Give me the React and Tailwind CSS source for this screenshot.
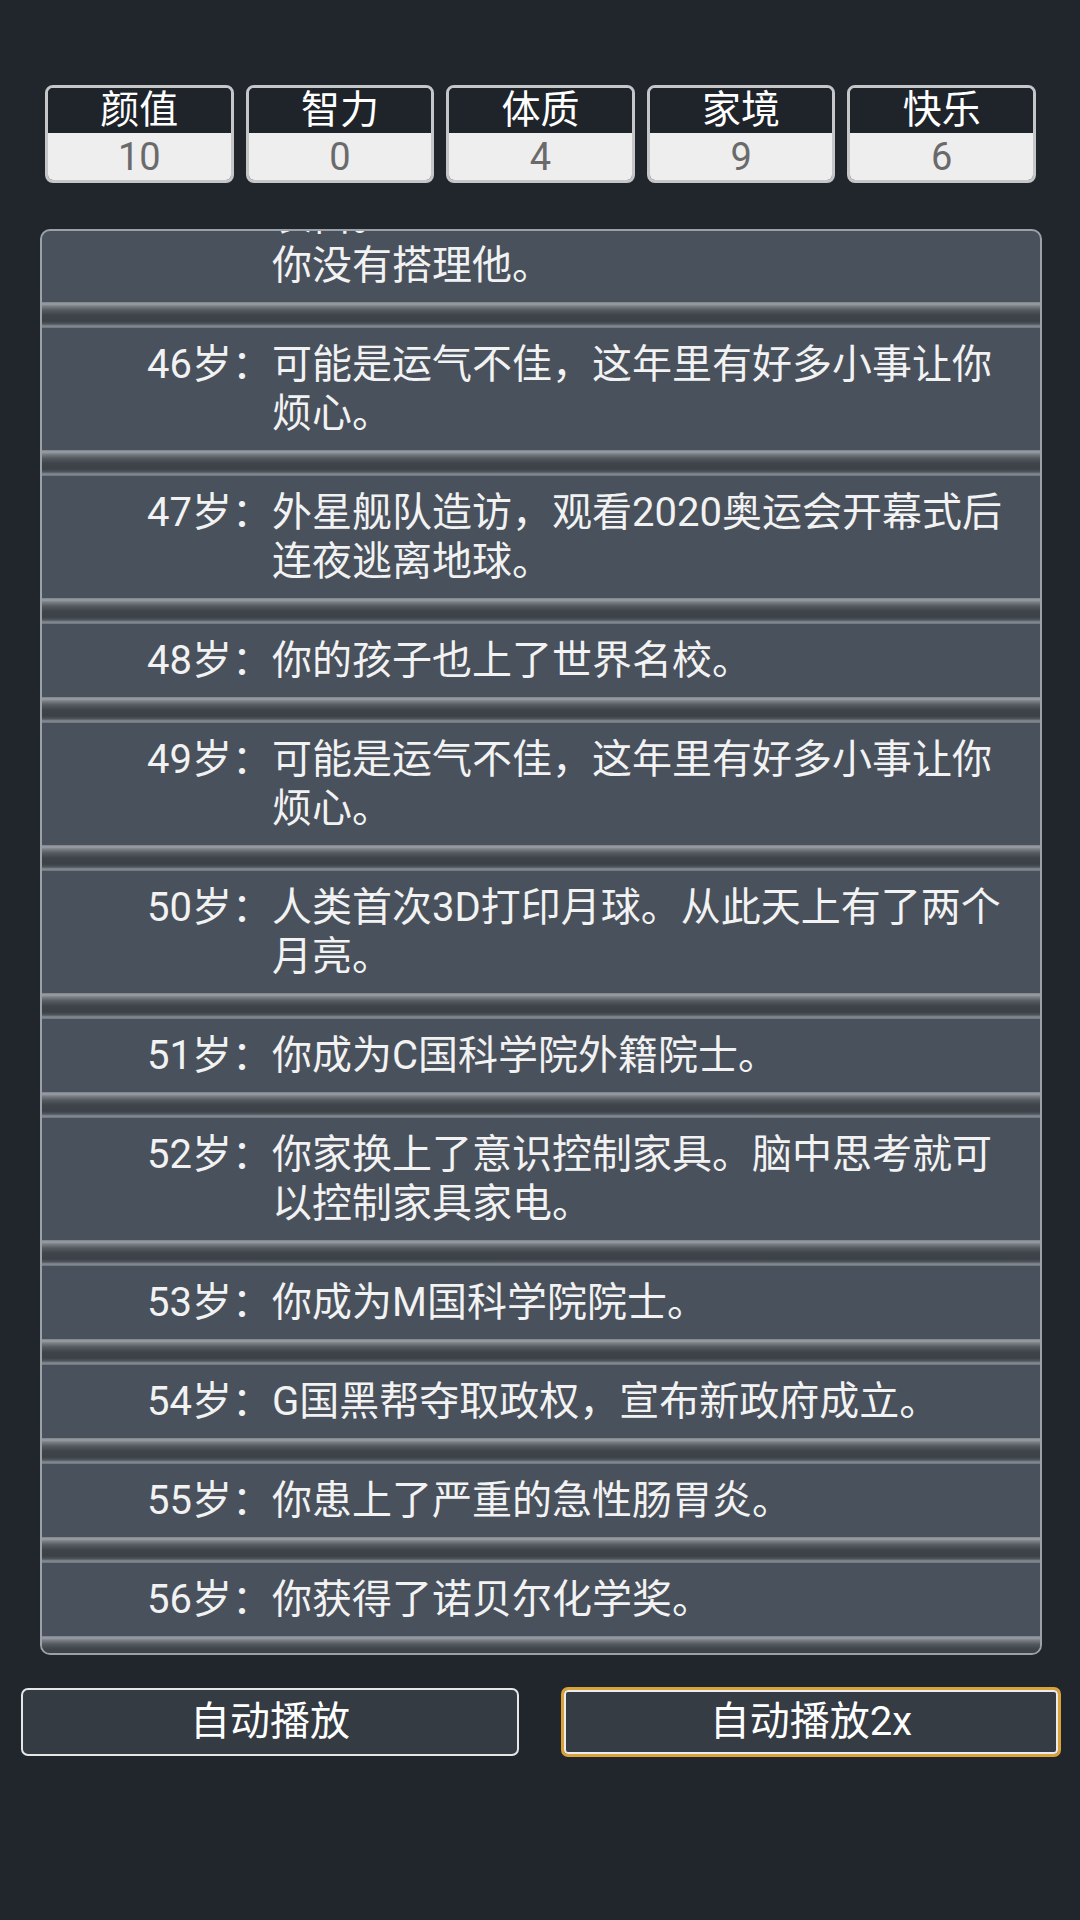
const stats = [
  { label: '颜值', value: 10 },
  { label: '智力', value: 0 },
  { label: '体质', value: 4 },
  { label: '家境', value: 9 },
  { label: '快乐', value: 6 },
];

// 每条记录可以有多段文字（事件 + 分支结果），每段各自换行
const events = [
  { age: 45, parts: ['有位异性暗恋你多年，今天终于当众向你表白。', '你没有搭理他。'] },
  { age: 46, parts: ['可能是运气不佳，这年里有好多小事让你烦心。'] },
  { age: 47, parts: ['外星舰队造访，观看2020奥运会开幕式后连夜逃离地球。'] },
  { age: 48, parts: ['你的孩子也上了世界名校。'] },
  { age: 49, parts: ['可能是运气不佳，这年里有好多小事让你烦心。'] },
  { age: 50, parts: ['人类首次3D打印月球。从此天上有了两个月亮。'] },
  { age: 51, parts: ['你成为C国科学院外籍院士。'] },
  { age: 52, parts: ['你家换上了意识控制家具。脑中思考就可以控制家具家电。'] },
  { age: 53, parts: ['你成为M国科学院院士。'] },
  { age: 54, parts: ['G国黑帮夺取政权，宣布新政府成立。'] },
  { age: 55, parts: ['你患上了严重的急性肠胃炎。'] },
  { age: 56, parts: ['你获得了诺贝尔化学奖。'] },
];

const font = "font-['Roboto','Noto_Sans_CJK_SC',sans-serif]";

function StatBox({ label, value }) {
  return (
    <div className="rounded-[8px] border-[3px] border-[#c4c6c8] overflow-hidden flex flex-col">
      <div className="h-[45px] bg-[#1f242b] text-white text-[39px] leading-[45px] text-center">{label}</div>
      <div className="h-[47px] pt-[1px] bg-[#eeeeee] text-[#6a6a6a] text-[38px] leading-[46px] text-center">{value}</div>
    </div>
  );
}

function Rail() {
  return (
    <div className="h-[26px] bg-[linear-gradient(to_bottom,#7b8187_0px,#9aa0a5_2px,#7a8086_4px,#555a61_8px,#3f444b_13px,#3c4148_19px,#50565d_22px,#878d93_24px,#6c737b_26px)]" />
  );
}

function EventRow({ age, parts }) {
  return (
    <div>
      <div className="flex py-3 text-[40px] leading-[49px] text-[#f2f2f2]">
        <div className="w-[230px] shrink-0 text-right">{age}岁：</div>
        <div className="w-[740px]">
          {parts.map((p, i) => <div key={i}>{p}</div>)}
        </div>
      </div>
      <Rail />
    </div>
  );
}

export default function App() {
  return (
    <div className={`w-[1080px] min-h-[1920px] bg-[#21262d] pt-[85px] ${font}`}>
      <div className="grid grid-cols-5 gap-[12px] pl-[45px] pr-[44px]">
        {stats.map(s => <StatBox key={s.label} {...s} />)}
      </div>

      <div className="ml-[40px] mt-[46px] w-[1002px] h-[1426px] rounded-[10px] border-2 border-[#9ba1a7] bg-[#48515c] overflow-hidden">
        {/* 列表已滚动到底部附近 */}
        <div className="-mt-[100px]">
          {events.map(e => <EventRow key={e.age} {...e} />)}
        </div>
      </div>

      <div className="flex items-center gap-[42px] pl-[21px] mt-[32px]">
        <button className="w-[498px] h-[68px] rounded-[7px] border-2 border-[#e6e6e6] bg-[#353b43] text-white text-[40px] leading-none">
          自动播放
        </button>
        <button className="w-[500px] h-[70px] rounded-[7px] border-[3px] border-[#d9a23a] bg-[#363c44] shadow-[inset_0_0_0_2px_#ececec] text-white text-[40px] leading-none">
          自动播放2x
        </button>
      </div>
    </div>
  );
}
